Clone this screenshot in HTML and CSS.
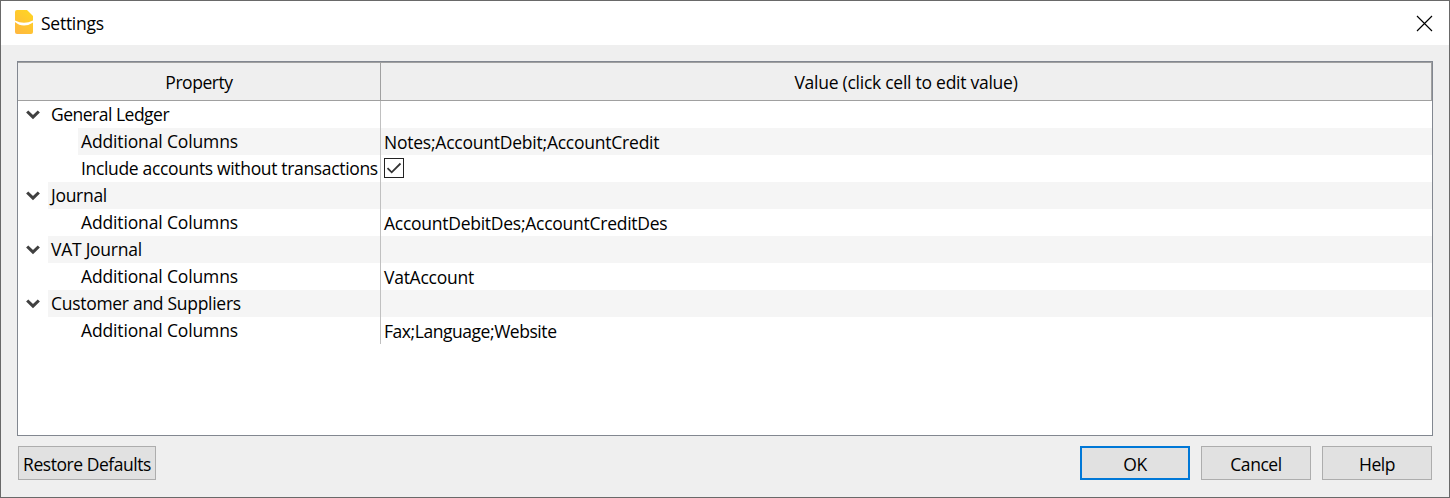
FILE: index.html
```
<!DOCTYPE html>
<html lang="en">
<head>
<meta charset="utf-8">
<title>Settings</title>
<link rel="stylesheet" href="styles.css">
</head>
<body>
<main class="dialog">
  <header class="titlebar">
    <svg class="logo" width="18" height="24" viewBox="0 0 18 24">
      <defs><linearGradient id="gold" x1="0" y1="1" x2="0.6" y2="0"><stop offset="0" stop-color="#ffb640"/><stop offset="1" stop-color="#ffd226"/></linearGradient></defs>
      <path fill="url(#gold)" d="M2 0H12L18 6V22Q18 24 16 24H2Q0 24 0 22V2Q0 0 2 0Z"/>
      <path fill="#fff" d="M0 10.5Q9 15 18 10.5V12.5Q14 15.5 9 15.5T0 12Z"/>
    </svg>
    <h1 class="title"><span class="t-settings">Settings</span></h1>
    <svg class="close" width="17" height="17" viewBox="0 0 17 17"><path d="M1 1L16 16M16 1L1 16" stroke="#000" stroke-width="1.15"/></svg>
  </header>
  <section class="tree">
    <div class="head">
      <div class="head-cell"><span class="t-property">Property</span></div>
      <div class="head-cell"><span class="t-value">Value (click cell to edit value)</span></div>
    </div>
    <div class="row group"><svg class="chevron" viewBox="0 0 14 10"><path d="M1.2 1.5L7 7.2L12.8 1.5"/></svg><div class="name"><span class="t-ledger">General Ledger</span></div><div class="value"></div></div>
    <div class="row shaded"><div class="name"><span class="t-columns">Additional Columns</span></div><div class="value"><span class="t-notes">Notes;AccountDebit;AccountCredit</span></div></div>
    <div class="row"><div class="name"><span class="t-include">Include accounts without transactions</span></div><div class="value"><svg class="check" width="20" height="20" viewBox="0 0 20 20"><rect x=".5" y=".5" width="19" height="19" fill="#fff" stroke="#222"/><path d="M3.5 10.2L7.7 14.3L16.5 5.5" fill="none" stroke="#333" stroke-width="1.8"/></svg></div></div>
    <div class="row group shaded"><svg class="chevron" viewBox="0 0 14 10"><path d="M1.2 1.5L7 7.2L12.8 1.5"/></svg><div class="name"><span class="t-journal">Journal</span></div><div class="value"></div></div>
    <div class="row"><div class="name"><span class="t-columns">Additional Columns</span></div><div class="value"><span class="t-des">AccountDebitDes;AccountCreditDes</span></div></div>
    <div class="row group shaded"><svg class="chevron" viewBox="0 0 14 10"><path d="M1.2 1.5L7 7.2L12.8 1.5"/></svg><div class="name"><span class="t-vat">VAT Journal</span></div><div class="value"></div></div>
    <div class="row"><div class="name"><span class="t-columns">Additional Columns</span></div><div class="value"><span class="t-vataccount">VatAccount</span></div></div>
    <div class="row group shaded"><svg class="chevron" viewBox="0 0 14 10"><path d="M1.2 1.5L7 7.2L12.8 1.5"/></svg><div class="name"><span class="t-customer">Customer and Suppliers</span></div><div class="value"></div></div>
    <div class="row"><div class="name"><span class="t-columns">Additional Columns</span></div><div class="value"><span class="t-fax">Fax;Language;Website</span></div></div>
  </section>
  <footer class="actions">
    <button class="button restore"><span class="t-restore">Restore Defaults</span></button>
    <button class="button primary"><span class="t-ok">OK</span></button>
    <button class="button"><span class="t-cancel">Cancel</span></button>
    <button class="button"><span class="t-help">Help</span></button>
  </footer>
</main>
</body>
</html>
```
FILE: styles.css
```
* { box-sizing: border-box; }
body { margin: 0; font: 17.5px/26px "Open Sans", "Noto Sans", sans-serif; color: #000; }
.dialog { width: 1450px; height: 498px; border: 1px solid #696969; background: #efefef; display: flex; flex-direction: column; overflow: hidden; }
.titlebar { height: 44px; background: #fff; display: flex; align-items: center; padding: 0 16px 0 14px; flex: none; }
.logo { margin-top: -2px; }
.title { margin: 0 auto 0 8px; font: inherit; }
.tree { margin: 16px 16px 0; height: 375px; flex: none; border: 1px solid #828790; background: #fff; }
.head { display: grid; grid-template-columns: 363px 1fr; height: 39px; border: 1px solid #a0a0a0; border-left: 0; background: #efefef; }
.head-cell { text-align: center; padding-top: 6px; white-space: nowrap; }
.head-cell:first-child { border-right: 1px solid #a0a0a0; }
.row { display: grid; grid-template-columns: 60px 303px 1fr; height: 27px; white-space: nowrap; }
.row.group { grid-template-columns: 30px 333px 1fr; }
.name { grid-column: 2; border-right: 1px solid #c0c0c0; padding-left: 3px; }
.value { grid-column: 3; padding: 1px 0 0 3px; display: flex; }
.shaded .name, .shaded .value { background: #f5f5f5; }
.chevron { width: 14px; height: 10px; margin: 8.5px 0 0 7.5px; fill: none; stroke: #404040; stroke-width: 3.1; }
.check { margin-top: 2px; }
.actions { display: flex; gap: 11px; padding: 10px 17px 0; }
.button { width: 110px; height: 34px; margin: 0; padding: 2px 0 0; border: 1px solid #adadad; background: #e1e1e1; font: inherit; color: #000; white-space: nowrap; }
.restore { width: 138px; margin-right: auto; }
.primary { border: 2px solid #0078d7; padding-top: 2px; }
[class^="t-"] { letter-spacing: -0.45px; }
.t-settings, .t-value, .t-vat, .t-des, .t-vataccount { letter-spacing: -0.26px; }
.t-ledger { letter-spacing: -0.5px; }
.t-columns { letter-spacing: -0.14px; }
.t-include { letter-spacing: -0.34px; }
.t-notes { letter-spacing: -0.23px; }
.t-journal, .t-customer { letter-spacing: -0.29px; }
```
